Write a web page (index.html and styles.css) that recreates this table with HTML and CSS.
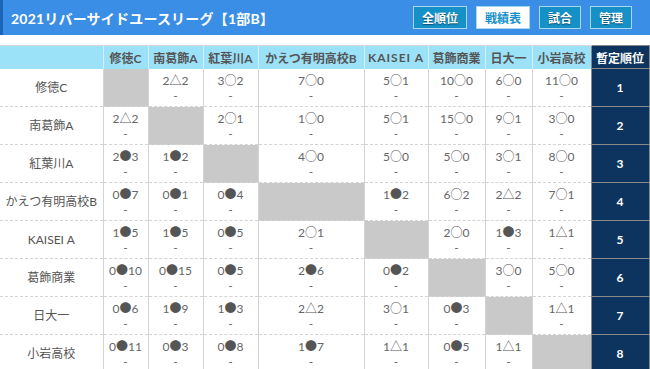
FILE: index.html
```html
<!DOCTYPE html>
<html lang="ja">
<head>
<meta charset="utf-8">
<link rel="stylesheet" href="styles.css">
</head>
<body>
<div class="bar">
  <h1 class="title">2021リバーサイドユースリーグ【1部B】</h1>
  <nav class="tabs">
    <a class="tab">全順位</a>
    <a class="tab active">戦績表</a>
    <a class="tab">試合</a>
    <a class="tab">管理</a>
  </nav>
</div>
<table class="grid">
  <colgroup>
    <col class="c-team"><col class="c1"><col class="c2"><col class="c3"><col class="c4"><col class="c5"><col class="c6"><col class="c7"><col class="c8"><col class="c-rank">
  </colgroup>
  <thead>
    <tr>
      <th></th><th>修徳C</th><th>南葛飾A</th><th>紅葉川A</th><th>かえつ有明高校B</th><th class="latin">KAISEI A</th><th>葛飾商業</th><th>日大一</th><th>小岩高校</th><th class="rank-h">暫定順位</th>
    </tr>
  </thead>
  <tbody>
    <tr><td class="team">修徳C</td><td class="self"></td><td>2<span class="s">△</span>2<br>-</td><td>3<span class="s">○</span>2<br>-</td><td>7<span class="s">○</span>0<br>-</td><td>5<span class="s">○</span>1<br>-</td><td>10<span class="s">○</span>0<br>-</td><td>6<span class="s">○</span>0<br>-</td><td>11<span class="s">○</span>0<br>-</td><td class="rank">1</td></tr>
    <tr><td class="team">南葛飾A</td><td>2<span class="s">△</span>2<br>-</td><td class="self"></td><td>2<span class="s">○</span>1<br>-</td><td>1<span class="s">○</span>0<br>-</td><td>5<span class="s">○</span>1<br>-</td><td>15<span class="s">○</span>0<br>-</td><td>9<span class="s">○</span>1<br>-</td><td>3<span class="s">○</span>0<br>-</td><td class="rank">2</td></tr>
    <tr><td class="team">紅葉川A</td><td>2<span class="s">●</span>3<br>-</td><td>1<span class="s">●</span>2<br>-</td><td class="self"></td><td>4<span class="s">○</span>0<br>-</td><td>5<span class="s">○</span>0<br>-</td><td>5<span class="s">○</span>0<br>-</td><td>3<span class="s">○</span>1<br>-</td><td>8<span class="s">○</span>0<br>-</td><td class="rank">3</td></tr>
    <tr><td class="team">かえつ有明高校B</td><td>0<span class="s">●</span>7<br>-</td><td>0<span class="s">●</span>1<br>-</td><td>0<span class="s">●</span>4<br>-</td><td class="self"></td><td>1<span class="s">●</span>2<br>-</td><td>6<span class="s">○</span>2<br>-</td><td>2<span class="s">△</span>2<br>-</td><td>7<span class="s">○</span>1<br>-</td><td class="rank">4</td></tr>
    <tr><td class="team">KAISEI A</td><td>1<span class="s">●</span>5<br>-</td><td>1<span class="s">●</span>5<br>-</td><td>0<span class="s">●</span>5<br>-</td><td>2<span class="s">○</span>1<br>-</td><td class="self"></td><td>2<span class="s">○</span>0<br>-</td><td>1<span class="s">●</span>3<br>-</td><td>1<span class="s">△</span>1<br>-</td><td class="rank">5</td></tr>
    <tr><td class="team">葛飾商業</td><td>0<span class="s">●</span>10<br>-</td><td>0<span class="s">●</span>15<br>-</td><td>0<span class="s">●</span>5<br>-</td><td>2<span class="s">●</span>6<br>-</td><td>0<span class="s">●</span>2<br>-</td><td class="self"></td><td>3<span class="s">○</span>0<br>-</td><td>5<span class="s">○</span>0<br>-</td><td class="rank">6</td></tr>
    <tr><td class="team">日大一</td><td>0<span class="s">●</span>6<br>-</td><td>1<span class="s">●</span>9<br>-</td><td>1<span class="s">●</span>3<br>-</td><td>2<span class="s">△</span>2<br>-</td><td>3<span class="s">○</span>1<br>-</td><td>0<span class="s">●</span>3<br>-</td><td class="self"></td><td>1<span class="s">△</span>1<br>-</td><td class="rank">7</td></tr>
    <tr><td class="team">小岩高校</td><td>0<span class="s">●</span>11<br>-</td><td>0<span class="s">●</span>3<br>-</td><td>0<span class="s">●</span>8<br>-</td><td>1<span class="s">●</span>7<br>-</td><td>1<span class="s">△</span>1<br>-</td><td>0<span class="s">●</span>5<br>-</td><td>1<span class="s">△</span>1<br>-</td><td class="self"></td><td class="rank">8</td></tr>
  </tbody>
</table>
</body>
</html>
```
FILE: styles.css
```css
html, body {
  margin: 0;
  padding: 0;
  background: #fff;
}
body {
  font-family: Lato, "Noto Sans CJK JP", sans-serif;
  color: #555;
  width: 650px;
  overflow: hidden;
}
.bar {
  height: 35px;
  background: #3a8ee6;
  border-left: 3px solid #1c64b8;
  display: flex;
  align-items: center;
  justify-content: space-between;
  padding: 0 18px 0 8px;
  box-sizing: border-box;
}
.title {
  margin: 0;
  color: #fff;
  font-size: 14px;
  font-weight: bold;
  letter-spacing: 0.2px;
}
.tabs {
  display: flex;
  gap: 9px;
}
.tab {
  display: block;
  height: 23px;
  line-height: 21px;
  box-sizing: border-box;
  padding: 0 8px;
  background: #1591c8;
  border: 1px solid #a9d6ef;
  color: #fff;
  font-size: 12px;
  font-weight: bold;
  text-shadow: 0 1px 1px rgba(0,0,0,0.45);
  font-family: "Noto Sans CJK JP", sans-serif;
}
.tab.active {
  background: #fff;
  color: #1591c8;
  text-shadow: none;
}
.grid {
  margin-top: 10px;
  border-collapse: collapse;
  table-layout: fixed;
  width: 649px;
  font-size: 12px;
}
.c-team { width: 103px; }
.c1 { width: 45px; }
.c2 { width: 55px; }
.c3 { width: 55px; }
.c4 { width: 106px; }
.c5 { width: 64px; }
.c6 { width: 57px; }
.c7 { width: 47px; }
.c8 { width: 59px; }
.c-rank { width: 58px; }
.grid th {
  height: 22px;
  padding: 0;
  background: #9be2f9;
  color: #555;
  font-weight: bold;
  font-size: 12px;
  border-top: 1px solid #d8d8d8;
  border-left: 1px solid #d6eef6;
  white-space: nowrap;
}
.grid th.latin {
  letter-spacing: 1px;
}
.grid th:first-child { border-left: none; }
.grid th.rank-h {
  background: #0c345e;
  color: #fff;
  border: 1px solid #888;
}
.grid td {
  height: 38px;
  padding: 0;
  box-sizing: border-box;
  text-align: center;
  vertical-align: middle;
  line-height: 15px;
  color: #666;
  border-left: 1px solid #d4d4d4;
  border-bottom: 1px dashed #d4d4d4;
  white-space: nowrap;
}
.s {
  font-family: "Noto Sans CJK JP", sans-serif;
  color: #555;
}
.grid td.team {
  border-left: none;
  color: #555;
}
.grid td.self {
  background: #c9c9c9;
}
.grid td.rank {
  background: #0c345e;
  color: #fff;
  font-weight: bold;
  border: 1px solid #8a8a8a;
}
```
